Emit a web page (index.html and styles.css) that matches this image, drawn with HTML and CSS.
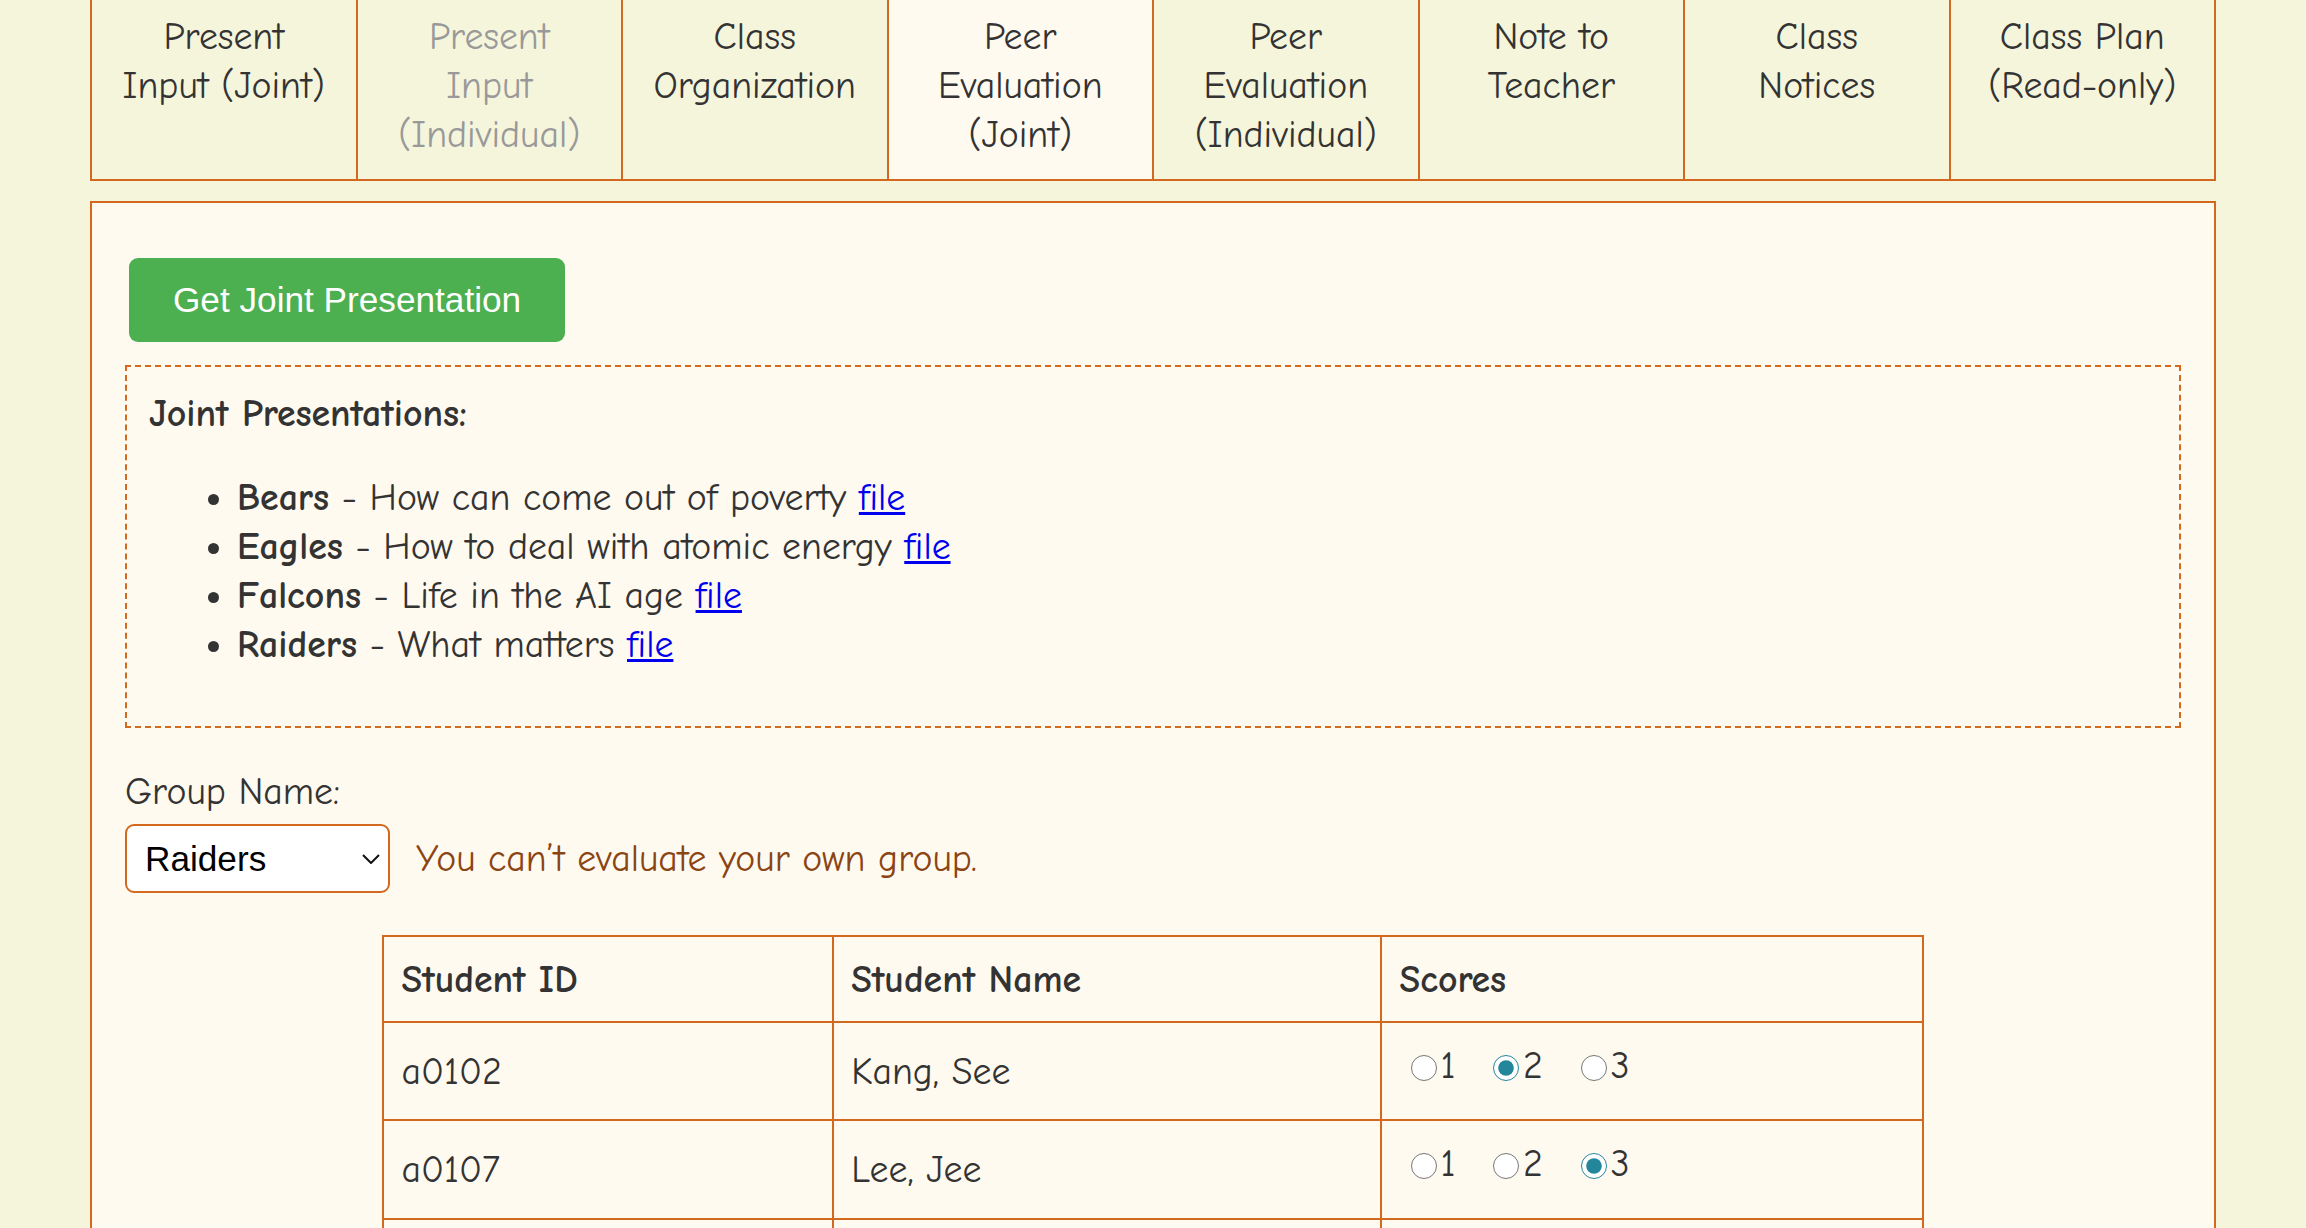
FILE: index.html
```html
<!DOCTYPE html>
<html lang="en">
<head>
<meta charset="UTF-8">
<meta name="viewport" content="width=device-width, initial-scale=1.0">
<title>Peer Evaluation (Joint)</title>
<link rel="stylesheet" href="styles.css">
</head>
<body>

<div class="container">
    <div class="tabs">
        <div class="tab">Present<br>Input (Joint)</div>
        <div class="tab disabled">Present<br>Input<br>(Individual)</div>
        <div class="tab">Class<br>Organization</div>
        <div class="tab active">Peer<br>Evaluation<br>(Joint)</div>
        <div class="tab">Peer<br>Evaluation<br>(Individual)</div>
        <div class="tab">Note to<br>Teacher</div>
        <div class="tab">Class<br>Notices</div>
        <div class="tab">Class Plan<br>(Read-only)</div>
    </div>

    <div class="tab-content">
        <button class="btn-green">Get Joint Presentation</button>

        <div class="presentations">
            <p class="presentations-title"><strong>Joint Presentations:</strong></p>
            <ul>
                <li><strong>Bears</strong> - How can come out of poverty <a href="#">file</a></li>
                <li><strong>Eagles</strong> - How to deal with atomic energy <a href="#">file</a></li>
                <li><strong>Falcons</strong> - Life in the AI age <a href="#">file</a></li>
                <li><strong>Raiders</strong> - What matters <a href="#">file</a></li>
            </ul>
        </div>

        <label class="group-label" for="group">Group Name:</label>
        <div class="group-row">
            <div class="select-wrap">
                <select id="group">
                    <option>Bears</option>
                    <option>Eagles</option>
                    <option>Falcons</option>
                    <option selected>Raiders</option>
                </select>
                <svg class="chevron" width="18" height="10" viewBox="0 0 18 10"><path d="M1 1l8 8 8-8" fill="none" stroke="#111" stroke-width="2"/></svg>
            </div>
            <span class="warning">You can’t evaluate your own group.</span>
        </div>

        <table class="score-table">
            <thead>
                <tr>
                    <th class="col-id">Student ID</th>
                    <th class="col-name">Student Name</th>
                    <th>Scores</th>
                </tr>
            </thead>
            <tbody>
                <tr>
                    <td>a0102</td>
                    <td>Kang, See</td>
                    <td>
                        <div class="scores">
                            <label><input type="radio" name="s1">1</label>
                            <label><input type="radio" name="s1" checked>2</label>
                            <label><input type="radio" name="s1">3</label>
                        </div>
                    </td>
                </tr>
                <tr>
                    <td>a0107</td>
                    <td>Lee, Jee</td>
                    <td>
                        <div class="scores">
                            <label><input type="radio" name="s2">1</label>
                            <label><input type="radio" name="s2">2</label>
                            <label><input type="radio" name="s2" checked>3</label>
                        </div>
                    </td>
                </tr>
                <tr>
                    <td>a0111</td>
                    <td>Park, Min</td>
                    <td>
                        <div class="scores">
                            <label><input type="radio" name="s3">1</label>
                            <label><input type="radio" name="s3">2</label>
                            <label><input type="radio" name="s3">3</label>
                        </div>
                    </td>
                </tr>
            </tbody>
        </table>
    </div>
</div>

</body>
</html>
```

FILE: styles.css
```css
body {
    font-family: 'Comic Sans MS', 'Comic Neue', cursive;
    font-size: 37.8px;
    line-height: 49px;
    margin: 0;
    padding: 0;
    background-color: #f5f5dc;
    color: #333;
}
.container {
    margin: 0 90px;
}
.tabs {
    display: flex;
    border-left: 2px solid #d2691e;
}
.tab {
    flex: 1;
    padding: 12px 10px 20px;
    border-right: 2px solid #d2691e;
    border-bottom: 2px solid #d2691e;
    text-align: center;
    background-color: #f5f5dc;
}
.tab.active {
    background-color: #fffaf0;
}
.tab.disabled {
    color: #999;
}
.tab-content {
    margin-top: 20px;
    padding: 33px;
    border: 2px solid #d2691e;
    background-color: #fffaf0;
}
.btn-green {
    margin: 22px 0 0 4px;
    padding: 22px 44px;
    border: none;
    border-radius: 9px;
    background-color: #4caf50;
    color: #fff;
    font-family: 'Liberation Sans', Arial, sans-serif;
    font-size: 35.2px;
    line-height: 40px;
    cursor: pointer;
}
.presentations {
    margin-top: 23px;
    padding: 22px;
    border: 2px dashed #d2691e;
}
.presentations-title {
    margin: 0;
}
.presentations ul {
    margin: 35px 0;
    padding-left: 88px;
}
.presentations a {
    color: #0000ee;
}
.group-label {
    display: block;
    margin-top: 39px;
}
.group-row {
    display: flex;
    align-items: center;
    gap: 26px;
    margin-top: 8px;
}
.select-wrap {
    position: relative;
    display: flex;
}
select {
    box-sizing: border-box;
    width: 265px;
    height: 69px;
    padding: 0 18px;
    border: 2px solid #d2691e;
    border-radius: 9px;
    background-color: #fff;
    font-family: 'Liberation Sans', Arial, sans-serif;
    font-size: 35.2px;
    color: #000;
    appearance: none;
    -webkit-appearance: none;
}
.chevron {
    position: absolute;
    right: 10px;
    top: 30px;
    pointer-events: none;
}
.warning {
    color: #8b4513;
}
.score-table {
    width: 75%;
    margin: 42px auto 0;
    border-collapse: collapse;
}
.score-table th,
.score-table td {
    padding: 17.6px;
    border: 2px solid #d2691e;
    text-align: left;
}
.col-id {
    width: 29.2%;
}
.col-name {
    width: 35.6%;
}
.scores {
    padding-bottom: 12px;
}
.scores label {
    margin-right: 14px;
}
.scores input {
    width: 26px;
    height: 26px;
    margin: 0 4px 0 11px;
    vertical-align: -3px;
    accent-color: #24869a;
}
```
